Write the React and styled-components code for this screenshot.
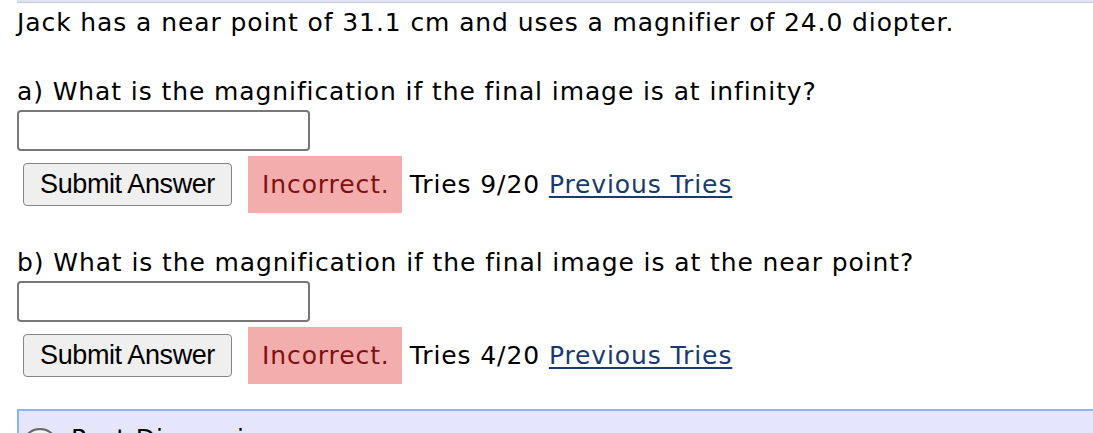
import React from 'react';
import styled, { createGlobalStyle } from 'styled-components';

const Global = createGlobalStyle`
  html, body { margin: 0; padding: 0; background: #fff; }
  body { font-family: "DejaVu Sans", Verdana, sans-serif; color: #000; overflow: hidden; }
`;

const Page = styled.div`
  padding-left: 17px;
  width: 1076px;
  height: 433px;
  overflow: hidden;
`;

const TopStrip = styled.div`
  height: 2px;
  background: #e2e2f6;
  border-bottom: 1px solid #c9c9d9;
`;

const Text = styled.p`
  margin: 0;
  font-size: 25px;
  letter-spacing: 0.9px;
  line-height: 28px;
  margin-top: ${p => p.top}px;
`;

const AnswerInput = styled.input`
  display: block;
  box-sizing: border-box;
  width: 293px;
  height: 41px;
  margin-top: ${p => p.top}px;
  border: 2px solid #777;
  border-radius: 4px;
  background: #fff;
  outline: none;
`;

const ResultRow = styled.div`
  display: flex;
  align-items: center;
  margin-top: 5px;
  height: 57px;
`;

const SubmitButton = styled.button`
  box-sizing: border-box;
  width: 209px;
  height: 43px;
  margin-left: 6px;
  border: 1.5px solid #858585;
  border-radius: 4px;
  background: #efefef;
  font-family: "Liberation Sans", Arial, sans-serif;
  font-size: 27px;
  letter-spacing: -0.4px;
  color: #000;
  padding: 0;
`;

const Verdict = styled.span`
  box-sizing: border-box;
  height: 57px;
  margin-left: 16px;
  padding: 0 12px 0 14px;
  display: flex;
  align-items: center;
  background: #f3adad;
  color: #7d1111;
  font-size: 25px;
  letter-spacing: 0.9px;
`;

const Tries = styled.span`
  margin-left: 8px;
  font-size: 25px;
  letter-spacing: 0.9px;
`;

const Link = styled.a`
  color: #183a6c;
  text-decoration: underline;
  text-underline-offset: 3px;
  cursor: pointer;
`;

const Discussion = styled.div`
  margin-top: ${p => p.top}px;
  height: 40px;
  background: #e5e5fd;
  border-top: 2px solid #8ab4f2;
  border-left: 2px solid #8ab4f2;
  display: flex;
  align-items: flex-start;
  padding: 14px 0 0 4px;
  box-sizing: border-box;
  gap: 14px;
  font-size: 25px;
  letter-spacing: 0.9px;
  line-height: 28px;
`;

const Bubble = styled.span`
  width: 34px;
  height: 30px;
  border-radius: 50%;
  border: 2px solid #666;
  background: #f4f4f4;
  margin-top: 3px;
  box-sizing: border-box;
  flex-shrink: 0;
`;

const Part = ({ top, question, tries }) => (
  <>
    <Text top={top}>{question}</Text>
    <AnswerInput top={4} />
    <ResultRow>
      <SubmitButton>Submit Answer</SubmitButton>
      <Verdict>Incorrect.</Verdict>
      <Tries>
        Tries {tries}/20 <Link>Previous Tries</Link>
      </Tries>
    </ResultRow>
  </>
);

export default function App() {
  return (
    <>
      <Global />
      <Page>
        <TopStrip />
        <Text top={6}>Jack has a near point of 31.1 cm and uses a magnifier of 24.0 diopter.</Text>
        <Part top={41} question="a) What is the magnification if the final image is at infinity?" tries={9} />
        <Part top={36} question="b) What is the magnification if the final image is at the near point?" tries={4} />
        <Discussion top={25}>
          <Bubble />
          <span>Post Discussion</span>
        </Discussion>
      </Page>
    </>
  );
}
